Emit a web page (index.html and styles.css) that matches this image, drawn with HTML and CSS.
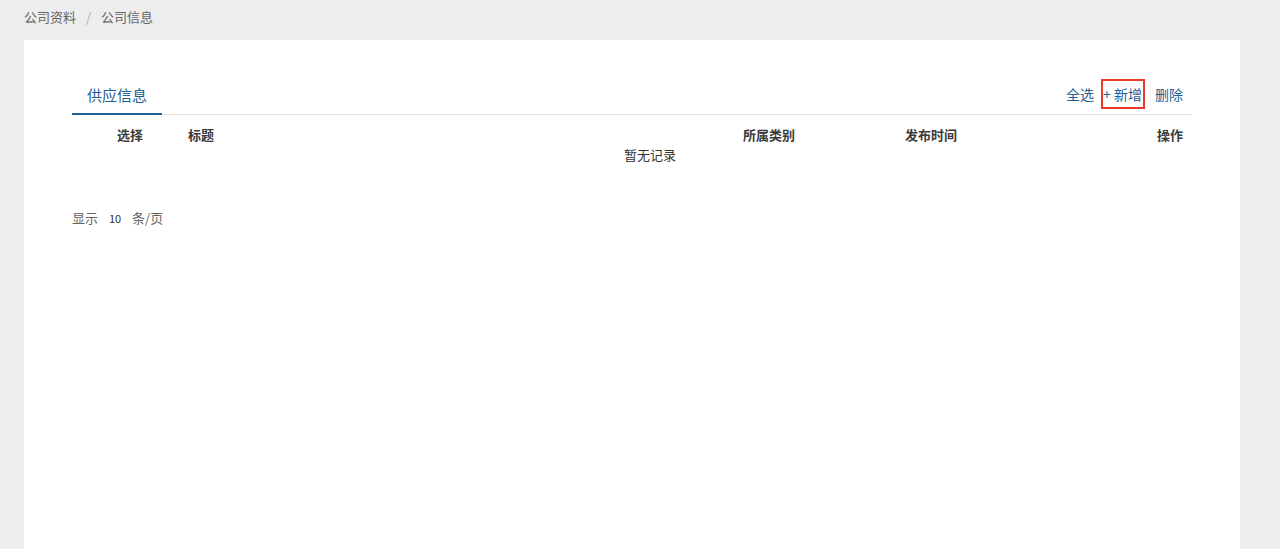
FILE: index.html
```html
<!DOCTYPE html>
<html lang="zh">
<head>
  <meta charset="UTF-8" />
  <title>公司信息</title>
  <link rel="stylesheet" href="styles.css">
</head>
<body>
  <div class="breadcrumb">
    <span>公司资料</span>
    <span class="sep">/</span>
    <span>公司信息</span>
  </div>

  <section class="panel">
    <div class="tabs">
      <a class="tab active" href="#">供应信息</a>
      <div class="actions">
        <a href="#">全选</a>
        <a href="#" class="add">+ 新增</a>
        <a href="#">删除</a>
      </div>
    </div>

    <div class="list">
      <div class="row head">
        <div class="c-check">选择</div>
        <div class="c-title">标题</div>
        <div class="c-cat">所属类别</div>
        <div class="c-time">发布时间</div>
        <div class="c-op">操作</div>
      </div>
      <div class="empty">暂无记录</div>
    </div>

    <div class="pager">
      <span>显示</span>
      <span class="num">10</span>
      <span>条/页</span>
    </div>
  </section>
</body>
</html>
```

FILE: styles.css
```css
:root {
  --bg: #ededed;
  --text: #333333;
  --muted: #666666;
  --blue: #1f5f93;
}

* {
  box-sizing: border-box;
}

body {
  margin: 0;
  background: var(--bg);
  color: var(--text);
  font-family: "Noto Sans CJK SC", "Noto Sans", sans-serif;
  font-size: 13px;
  height: 549px;
  overflow: hidden;
}

a {
  text-decoration: none;
  color: var(--blue);
}

.breadcrumb {
  height: 40px;
  padding: 7px 0 0 24px;
  line-height: 20px;
  color: var(--muted);
}

.breadcrumb .sep {
  color: #aaa;
  margin: 0 7px;
}

.panel {
  background: #fff;
  margin: 0 40px 0 24px;
  padding: 34px 48px 0 48px;
  height: 509px;
}

.tabs {
  display: flex;
  justify-content: space-between;
  align-items: flex-end;
  border-bottom: 1px solid #e2e2e2;
  height: 41px;
}

.tab {
  display: block;
  width: 90px;
  text-align: center;
  font-size: 15px;
  line-height: 36px;
  padding-top: 4px;
  border-bottom: 2px solid var(--blue);
  margin-bottom: -1px;
}

.actions {
  display: flex;
  align-items: center;
  height: 40px;
  padding-right: 9px;
  font-size: 14px;
}

.actions a {
  line-height: 20px;
}

.actions .add {
  border: 2px solid #ea3a2a;
  padding: 3px 1px 3px 0;
  margin: 0 10px 0 7px;
}

.row {
  display: flex;
  font-weight: bold;
  line-height: 20px;
  padding-top: 10px;
  color: #3a3a3a;
}

.c-check {
  width: 80px;
  text-align: right;
  padding-right: 9px;
}

.c-title {
  width: 591px;
  padding-left: 36px;
}

.c-cat {
  width: 162px;
}

.c-time {
  width: 140px;
}

.c-op {
  flex: 1;
  text-align: right;
  padding-right: 9px;
}

.empty {
  text-align: center;
  padding-left: 36px;
  line-height: 20px;
}

.pager {
  margin-top: 43px;
  color: var(--muted);
  line-height: 20px;
}

.pager .num {
  font-size: 11px;
  color: var(--text);
  margin: 0 8px;
}
```
